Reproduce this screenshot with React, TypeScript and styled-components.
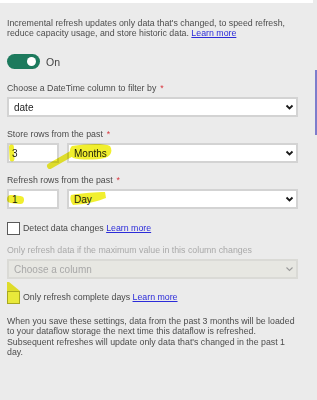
import styled, { createGlobalStyle } from 'styled-components';

const GlobalStyle = createGlobalStyle`
  html, body {
    margin: 0;
    padding: 0;
    background: #ebebeb;
  }
  body {
    font-family: 'Liberation Sans', Arial, sans-serif;
    color: #4a4a4a;
  }
`;

const Page = styled.div`
  position: relative;
  width: 317px;
  height: 400px;
  overflow: hidden;
  background: #ebebeb;
`;

const TopStrip = styled.div`
  width: 313px;
  height: 3px;
  background: #ffffff;
`;

const ScrollThumb = styled.div`
  position: absolute;
  right: 0;
  top: 70px;
  width: 2px;
  height: 65px;
  background: #7d7dcc;
`;

const Content = styled.div`
  width: 291px;
  padding: 0 7px;
  display: flex;
  flex-direction: column;
`;

const Para = styled.p<{ $top: number; $lh: number }>`
  margin: ${(p) => p.$top}px 0 0;
  font-size: 8.8px;
  line-height: ${(p) => p.$lh}px;
  color: #4d4d4d;
`;

const Link = styled.a`
  color: #2b2bd9;
  text-decoration: underline;
`;

const ToggleRow = styled.div`
  margin-top: 16px;
  display: flex;
  align-items: center;
  gap: 6px;
  height: 15px;
`;

const Toggle = styled.div`
  width: 33px;
  height: 15px;
  border-radius: 8px;
  background: #1d7a5d;
  display: flex;
  align-items: center;
  justify-content: flex-end;
  padding-right: 4px;
  box-sizing: border-box;
`;

const Knob = styled.div`
  width: 9px;
  height: 9px;
  border-radius: 50%;
  background: #ffffff;
`;

const ToggleText = styled.span`
  font-size: 10.5px;
  color: #444;
`;

const Field = styled.div<{ $top: number }>`
  margin-top: ${(p) => p.$top}px;
  display: flex;
  flex-direction: column;
  gap: 3px;
`;

const Label = styled.div<{ $disabled?: boolean }>`
  font-size: 8.8px;
  line-height: 11px;
  color: ${(p) => (p.$disabled ? '#a9a9a9' : '#4a4a4a')};
`;

const Req = styled.span`
  color: #d9363e;
  margin-left: 4px;
`;

const Row = styled.div`
  position: relative;
  display: flex;
  gap: 8px;
`;

const Box = styled.div<{ $w?: number; $disabled?: boolean }>`
  box-sizing: border-box;
  height: 20px;
  flex: ${(p) => (p.$w ? `0 0 ${p.$w}px` : '1 1 auto')};
  background: ${(p) => (p.$disabled ? '#e7e7e2' : '#ffffff')};
  border: 2px solid ${(p) => (p.$disabled ? '#dadad6' : '#d3d3d3')};
  display: flex;
  align-items: center;
  justify-content: space-between;
  padding: 0 2px 0 ${(p) => (p.$w ? 3 : 5)}px;
  font-size: 10px;
  color: ${(p) => (p.$disabled ? '#a8a8a8' : '#222')};
`;

const Chevron = ({ muted }: { muted?: boolean }) => (
  <svg width="9" height="6" viewBox="0 0 9 6">
    <polyline
      points="1.5,1.5 4.5,4.5 7.5,1.5"
      fill="none"
      stroke={muted ? '#9a9a9a' : '#1a1a1a'}
      strokeWidth={muted ? 1.1 : 1.8}
    />
  </svg>
);

const CheckRow = styled.label<{ $top: number }>`
  position: relative;
  margin-top: ${(p) => p.$top}px;
  display: flex;
  align-items: center;
  gap: 3px;
  font-size: 8.8px;
  line-height: 13px;
  color: #4a4a4a;
`;

const CheckBox = styled.span<{ $marked?: boolean }>`
  box-sizing: border-box;
  width: 13px;
  height: 13px;
  background: ${(p) => (p.$marked ? '#e9e93a' : '#ffffff')};
  border: 1px solid ${(p) => (p.$marked ? '#a8a820' : '#5a5a5a')};
`;

const Marker = styled.svg`
  position: absolute;
  left: 0;
  top: 0;
  pointer-events: none;
  mix-blend-mode: multiply;
  overflow: visible;
`;

const YELLOW = '#f1ef2e';

export default function App() {
  return (
    <Page>
      <GlobalStyle />
      <TopStrip />
      <ScrollThumb />
      <Content>
        <Para $top={15} $lh={10}>
          Incremental refresh updates only data that's changed, to speed refresh,
          reduce capacity usage, and store historic data. <Link>Learn more</Link>
        </Para>

        <ToggleRow>
          <Toggle>
            <Knob />
          </Toggle>
          <ToggleText>On</ToggleText>
        </ToggleRow>

        <Field $top={14}>
          <Label>
            Choose a DateTime column to filter by<Req>*</Req>
          </Label>
          <Box>
            date
            <Chevron />
          </Box>
        </Field>

        <Field $top={12}>
          <Label>
            Store rows from the past<Req>*</Req>
          </Label>
          <Row>
            <Box $w={52}>3</Box>
            <Box>
              Months
              <Chevron />
            </Box>
            <Marker width="120" height="30">
              <path d="M4.5 4 L5 16" stroke={YELLOW} strokeWidth="5" strokeLinecap="round" />
              <path
                d="M65 3 C78 1 96 0 103 3 C106 8 104 13 98 15 C88 17 74 17 66 15 C62 11 62 6 65 3 Z"
                fill={YELLOW}
              />
              <path d="M43 23 L64 11" stroke={YELLOW} strokeWidth="6" strokeLinecap="round" />
            </Marker>
          </Row>
        </Field>

        <Field $top={12}>
          <Label>
            Refresh rows from the past<Req>*</Req>
          </Label>
          <Row>
            <Box $w={52}>1</Box>
            <Box>
              Day
              <Chevron />
            </Box>
            <Marker width="120" height="30">
              <path d="M4 10 L13 11" stroke={YELLOW} strokeWidth="8" strokeLinecap="round" />
              <path
                d="M64 6 C75 4 90 3 98 3 L99 9 C92 12 80 15 66 16 C63 12 63 9 64 6 Z"
                fill={YELLOW}
              />
            </Marker>
          </Row>
        </Field>

        <CheckRow $top={13}>
          <CheckBox />
          <span>
            Detect data changes <Link>Learn more</Link>
          </span>
        </CheckRow>

        <Field $top={10}>
          <Label $disabled>Only refresh data if the maximum value in this column changes</Label>
          <Box $disabled>
            Choose a column
            <Chevron muted />
          </Box>
        </Field>

        <CheckRow $top={12}>
          <Marker width="20" height="20" style={{ top: -9 }}>
            <polygon points="0,0 2,0 13,9 0,9" fill={YELLOW} />
          </Marker>
          <CheckBox $marked />
          <span>
            Only refresh complete days <Link>Learn more</Link>
          </span>
        </CheckRow>

        <Para $top={12} $lh={10.4}>
          When you save these settings, data from the past 3 months will be loaded
          to your dataflow storage the next time this dataflow is refreshed.
          Subsequent refreshes will update only data that's changed in the past 1
          day.
        </Para>
      </Content>
    </Page>
  );
}
